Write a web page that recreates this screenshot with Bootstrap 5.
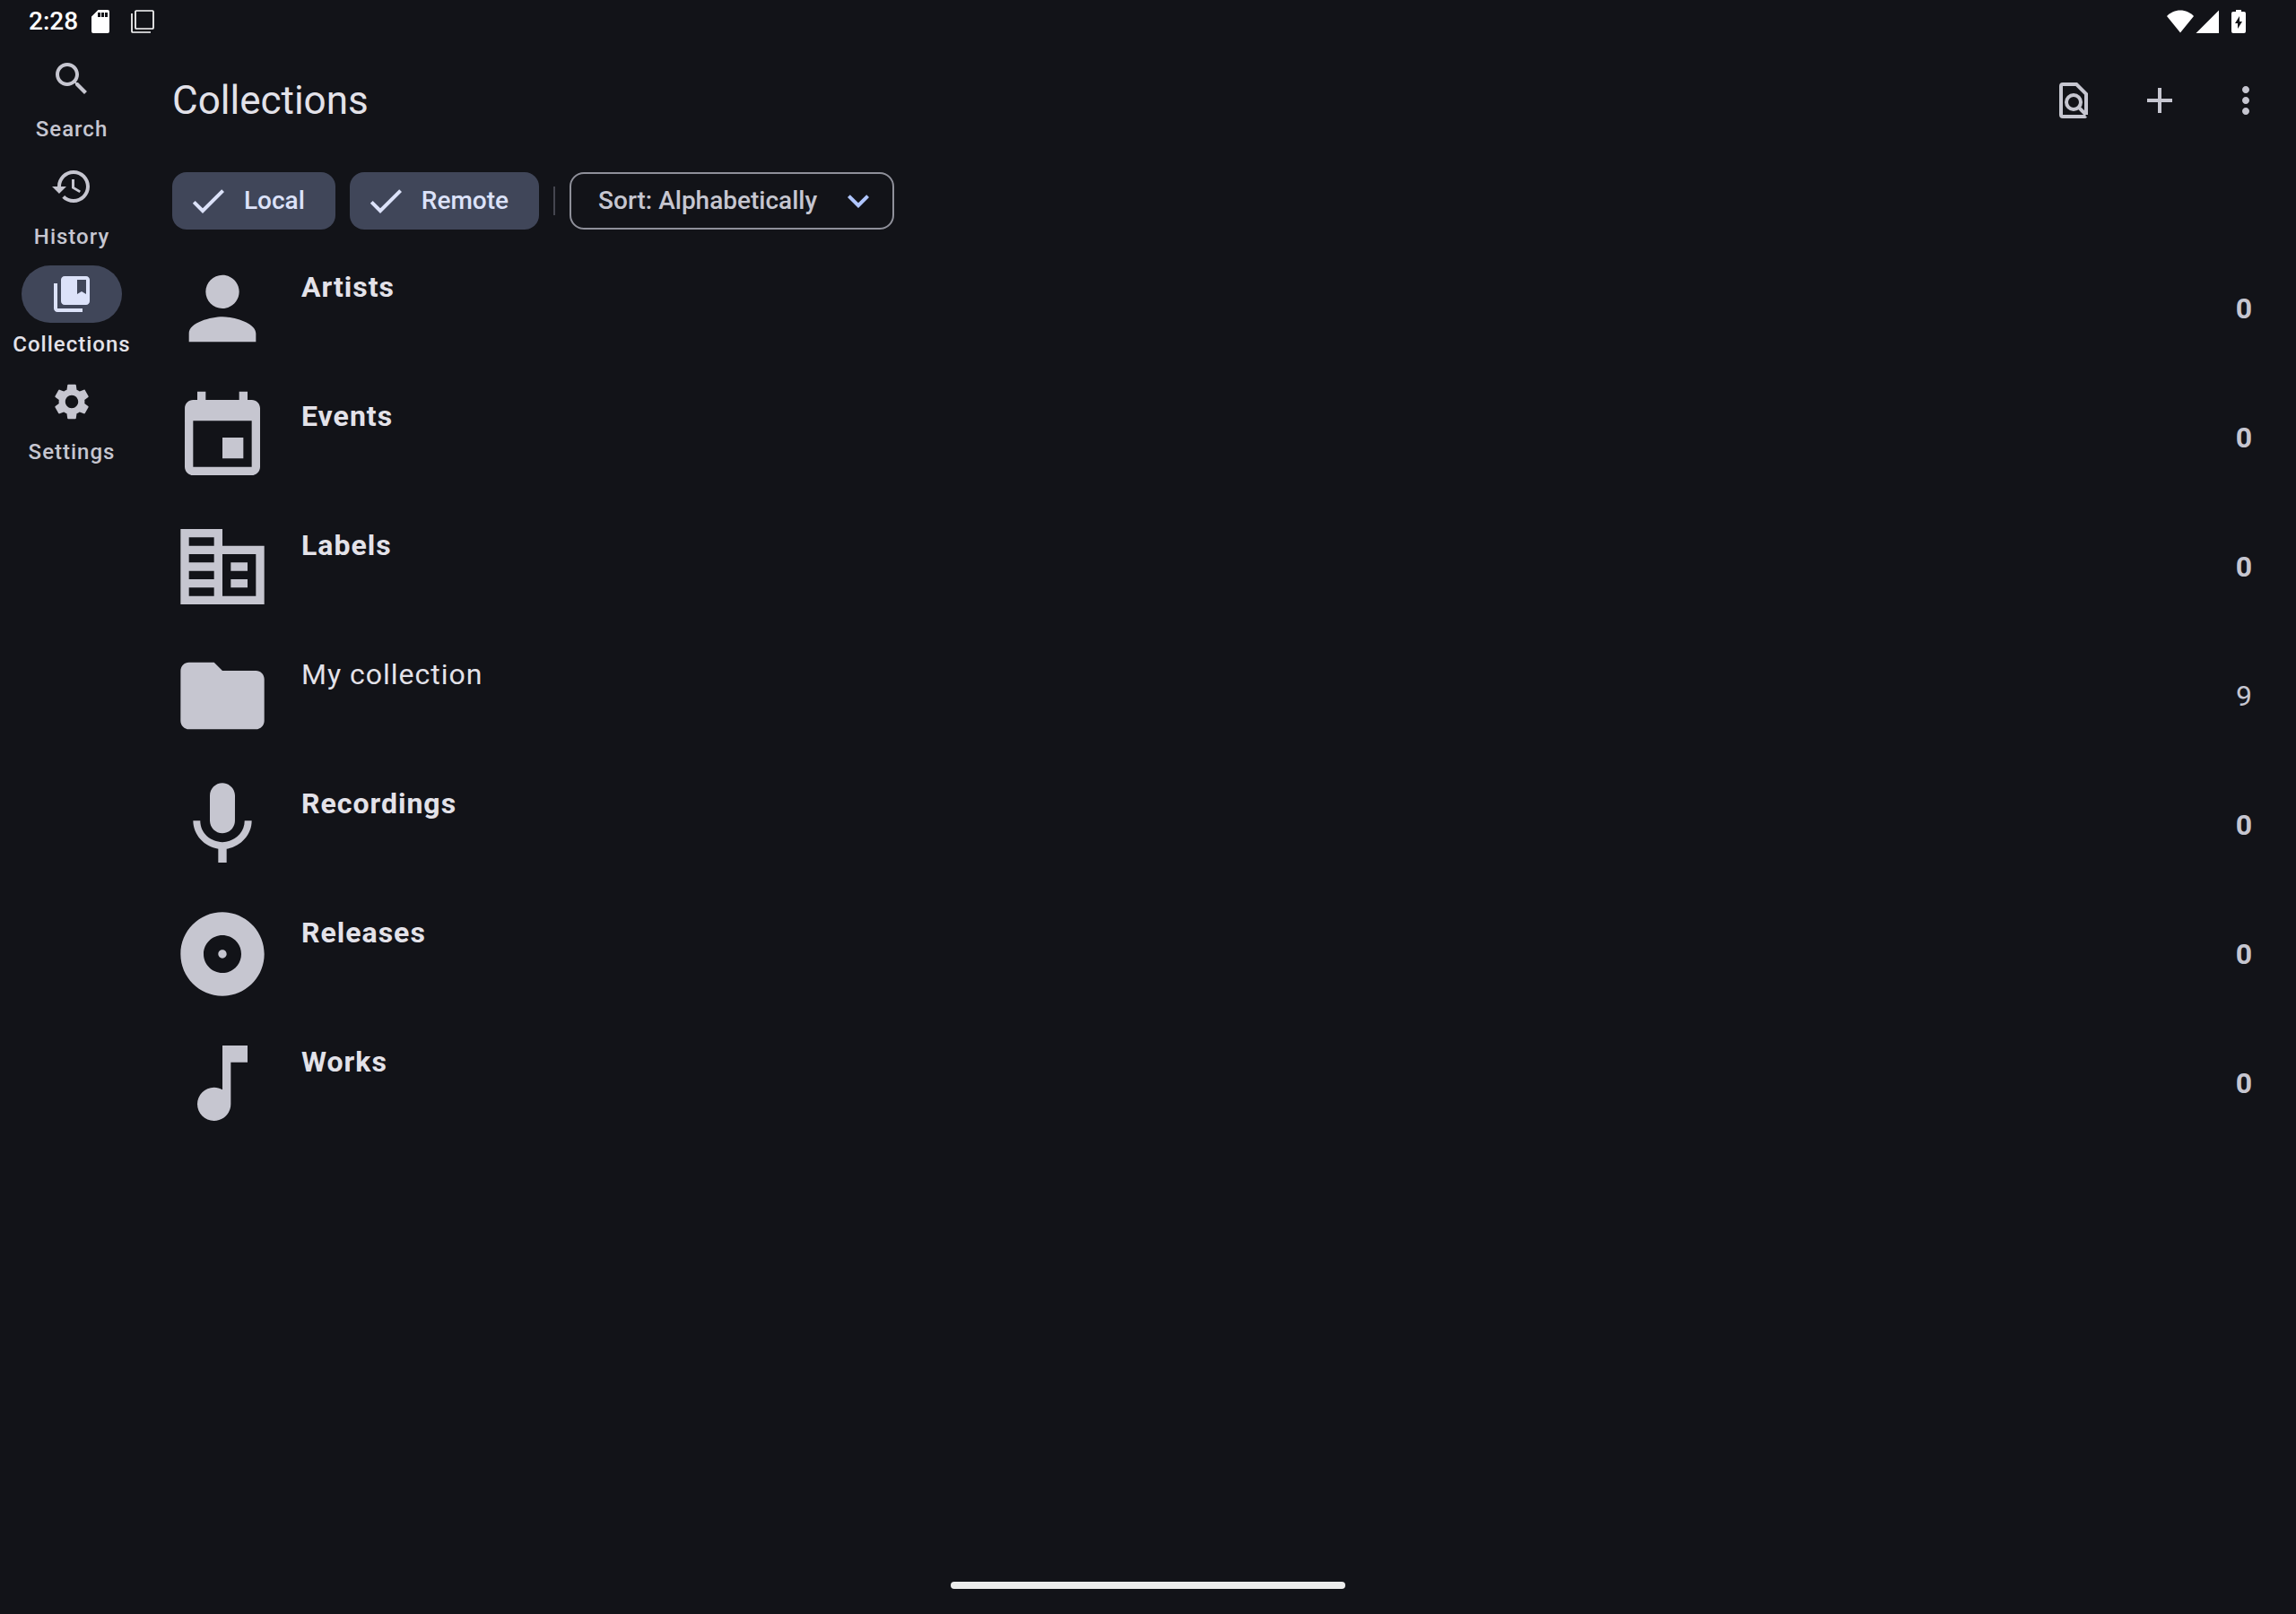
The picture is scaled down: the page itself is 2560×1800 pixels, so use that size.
<!DOCTYPE html>
<html lang="en" data-bs-theme="dark">
<head>
<meta charset="utf-8">
<meta name="viewport" content="width=device-width, initial-scale=1">
<title>Collections</title>
<link href="https://cdn.jsdelivr.net/npm/bootstrap@5.3.0/dist/css/bootstrap.min.css" rel="stylesheet">
<style>
  :root {
    --surface: #121318;
    --on-surface: #e3e2e9;
    --on-surface-variant: #c6c6d0;
    --outline: #8f909a;
    --outline-variant: #45464f;
    --secondary-container: #404659;
    --on-secondary-container: #dce2f9;
    --primary: #b0c6ff;
  }
  body {
    background: var(--surface);
    color: var(--on-surface);
    font-family: Roboto, sans-serif;
    font-size: 32px;
    line-height: 48px;
  }
  svg { display: block; fill: currentColor; flex: none; }
  .status-bar { height: 48px; padding: 0 56px 0 32px; color: #fff; font-size: 28px; font-weight: 500; line-height: 48px; }
  .status-icons { gap: 24px; margin-left: 15px; }
  .rail { width: 160px; padding-top: 8px; gap: 16px; }
  .rail-item { gap: 8px; color: var(--on-surface-variant); font-size: 24px; font-weight: 500; line-height: 32px; letter-spacing: 1px; }
  .rail-pill { width: 112px; height: 64px; }
  .rail-item.active { color: var(--on-surface); }
  .rail-item.active .rail-pill { background: var(--secondary-container); color: var(--on-secondary-container); }
  .pane { padding-left: 32px; }
  .top-bar { height: 128px; padding-right: 8px; }
  .top-bar h1 { color: var(--on-surface); font-size: 44px; line-height: 56px; font-weight: 400; }
  .icon-button { --bs-btn-padding-x: 24px; --bs-btn-padding-y: 24px; --bs-btn-border-width: 0; --bs-btn-color: var(--on-surface-variant); }
  .filters { padding: 16px 0; gap: 16px; }
  .chip { height: 64px; border-radius: 16px; font-size: 28px; font-weight: 500; line-height: 40px; }
  .btn-check:checked + .chip { background: var(--secondary-container); color: var(--on-secondary-container); }
  .filter-chip { gap: 16px; padding: 0 34px 0 16px; border: 0; }
  .sort-chip { appearance: none; background: transparent; border: 2px solid var(--outline); color: var(--on-surface-variant); padding: 0 83px 0 30px; }
  .sort-arrow { right: 16px; color: var(--primary); }
  .chip-divider { width: 2px; height: 32px; background: var(--outline-variant); }
  .entity { gap: 32px; padding: 16px 48px 16px 0; color: var(--on-surface); letter-spacing: 1px; }
  .entity-icon, .entity-count { color: var(--on-surface-variant); }
  .entity-name { padding-top: 8px; }
  .home-bar { width: 440px; height: 8px; border-radius: 4px; background: #ececec; margin-bottom: 28px; }
</style>
<script src="https://cdn.jsdelivr.net/npm/bootstrap@5.3.0/dist/js/bootstrap.bundle.min.js" defer></script>
</head>
<body class="d-flex flex-column min-vh-100">

<header class="status-bar d-flex align-items-center">
  <span>2:28</span>
  <div class="status-icons d-flex align-items-center">
    <svg width="20" height="26" viewBox="0 0 20 26"><path fill-rule="evenodd" d="M7.500 0H18a2 2 0 0 1 2 2V24a2 2 0 0 1-2 2H2a2 2 0 0 1-2-2V7.500zM7 3v5h3V3zM11 3v5h3V3zM15 3v5h3V3z"/></svg>
    <svg width="26" height="26" viewBox="0 0 26 26"><g fill="none" stroke="currentColor" stroke-width="1.700"><rect x="5" y="1" width="20" height="20" rx="1"/><path d="M1 4v20a1 1 0 0 0 1 1h20"/></g></svg>
  </div>
  <div class="d-flex align-items-center ms-auto">
    <svg width="30" height="26" viewBox="0 0 30 26"><path d="M15 25.500 0 7C4 3 9 .500 15 .500S26 3 30 7z"/></svg>
    <svg width="42" height="26" viewBox="0 0 42 26"><path d="M2.500 26 28 .500V26z"/></svg>
    <svg width="16" height="26" viewBox="0 0 16 26"><path fill-rule="evenodd" d="M5 0h6v2h3a2 2 0 0 1 2 2v20a2 2 0 0 1-2 2H2a2 2 0 0 1-2-2V4a2 2 0 0 1 2-2h3zM9 7l-5 8h3v6l5-8H9z"/></svg>
  </div>
</header>

<div class="d-flex flex-grow-1">
  <nav class="rail d-flex flex-column flex-shrink-0" aria-label="Main">
    <a href="#search" class="rail-item d-flex flex-column align-items-center text-decoration-none">
      <span class="rail-pill rounded-pill d-flex align-items-center justify-content-center"><svg width="48" height="48" viewBox="0 0 24 24"><path d="M15.500 14h-.790l-.280-.270C15.410 12.590 16 11.110 16 9.500 16 5.910 13.090 3 9.500 3S3 5.910 3 9.500 5.910 16 9.500 16c1.610 0 3.090-.590 4.230-1.570l.270.280v.790l5 4.990L20.490 19l-4.990-5zm-6 0C7.010 14 5 11.990 5 9.500S7.010 5 9.500 5 14 7.010 14 9.500 11.990 14 9.500 14z"/></svg></span>
      <span>Search</span>
    </a>
    <a href="#history" class="rail-item d-flex flex-column align-items-center text-decoration-none">
      <span class="rail-pill rounded-pill d-flex align-items-center justify-content-center"><svg width="48" height="48" viewBox="0 0 24 24"><path d="M13 3c-4.970 0-9 4.030-9 9H1l3.890 3.890.070.140L9 12H6c0-3.870 3.130-7 7-7s7 3.130 7 7-3.130 7-7 7c-1.930 0-3.680-.790-4.940-2.060l-1.420 1.420C8.270 19.990 10.510 21 13 21c4.970 0 9-4.030 9-9s-4.030-9-9-9zm-1 5v5l4.280 2.540.720-1.210-3.500-2.080V8H12z"/></svg></span>
      <span>History</span>
    </a>
    <a href="#collections" class="rail-item active d-flex flex-column align-items-center text-decoration-none" aria-current="page">
      <span class="rail-pill rounded-pill d-flex align-items-center justify-content-center"><svg width="48" height="48" viewBox="0 0 24 24"><path d="M4 6H2v14c0 1.100.900 2 2 2h14v-2H4V6zm16-4H8c-1.100 0-2 .900-2 2v12c0 1.100.900 2 2 2h12c1.100 0 2-.900 2-2V4c0-1.100-.900-2-2-2zm0 10-2.500-1.500L15 12V4h5v8z"/></svg></span>
      <span>Collections</span>
    </a>
    <a href="#settings" class="rail-item d-flex flex-column align-items-center text-decoration-none">
      <span class="rail-pill rounded-pill d-flex align-items-center justify-content-center"><svg width="48" height="48" viewBox="0 0 24 24"><path d="M19.140 12.940c.040-.300.060-.610.060-.940 0-.320-.020-.640-.070-.940l2.030-1.580c.180-.140.230-.410.120-.610l-1.920-3.320c-.120-.220-.370-.290-.590-.220l-2.390.960c-.500-.380-1.030-.700-1.620-.940l-.360-2.540c-.040-.240-.240-.410-.480-.410h-3.840c-.240 0-.430.170-.470.410l-.360 2.540c-.590.240-1.130.570-1.620.940l-2.390-.960c-.220-.080-.470 0-.590.220L2.740 8.870c-.120.210-.080.470.120.610l2.030 1.580c-.050.300-.090.630-.090.940s.020.640.070.940l-2.030 1.580c-.180.140-.230.410-.120.610l1.920 3.320c.120.220.370.290.590.220l2.390-.960c.500.380 1.030.700 1.620.940l.360 2.540c.050.240.240.410.480.410h3.840c.240 0 .440-.170.470-.410l.360-2.540c.590-.240 1.130-.560 1.620-.940l2.390.960c.220.080.470 0 .590-.220l1.920-3.320c.120-.220.070-.470-.120-.610l-2.010-1.580zM12 15.600c-1.980 0-3.600-1.620-3.600-3.600s1.620-3.600 3.600-3.600 3.600 1.620 3.600 3.600-1.620 3.600-3.600 3.600z"/></svg></span>
      <span>Settings</span>
    </a>
  </nav>

  <main class="pane flex-grow-1">
    <div class="top-bar d-flex align-items-center">
      <h1 class="mb-0 me-auto">Collections</h1>
      <button type="button" class="btn icon-button" aria-label="Find in page"><svg width="48" height="48" viewBox="0 0 24 24"><g fill="none" stroke="currentColor" stroke-width="2"><path d="M18.800 20.700A1 1 0 0 1 18 21H6a1 1 0 0 1-1-1V4a1 1 0 0 1 1-1h7.600L19 8.400V20"/><circle cx="12" cy="13" r="4"/><path d="m14.800 15.800 4.200 4.200"/></g></svg></button>
      <button type="button" class="btn icon-button" aria-label="Create collection"><svg width="48" height="48" viewBox="0 0 24 24"><path d="M19 13h-6v6h-2v-6H5v-2h6V5h2v6h6v2z"/></svg></button>
      <button type="button" class="btn icon-button" aria-label="More options"><svg width="48" height="48" viewBox="0 0 24 24"><path d="M12 8c1.100 0 2-.900 2-2s-.900-2-2-2-2 .900-2 2 .900 2 2 2zm0 2c-1.100 0-2 .900-2 2s.900 2 2 2 2-.900 2-2-.900-2-2-2zm0 6c-1.100 0-2 .900-2 2s.900 2 2 2 2-.900 2-2-.900-2-2-2z"/></svg></button>
    </div>

    <div class="filters d-flex align-items-center">
      <input type="checkbox" class="btn-check" id="filter-local" checked>
      <label class="btn chip filter-chip d-flex align-items-center" for="filter-local"><svg width="48" height="48" viewBox="0 0 24 24"><path d="M9 16.170 4.830 12l-1.420 1.410L9 19 21 7l-1.410-1.410z"/></svg>Local</label>
      <input type="checkbox" class="btn-check" id="filter-remote" checked>
      <label class="btn chip filter-chip d-flex align-items-center" for="filter-remote"><svg width="48" height="48" viewBox="0 0 24 24"><path d="M9 16.170 4.830 12l-1.420 1.410L9 19 21 7l-1.410-1.410z"/></svg>Remote</label>
      <div class="chip-divider"></div>
      <div class="position-relative d-flex align-items-center">
        <select class="chip sort-chip" aria-label="Sort order"><option selected>Sort: Alphabetically</option></select>
        <svg class="sort-arrow position-absolute pe-none" width="48" height="48" viewBox="0 0 24 24"><path d="M16.590 8.590 12 13.170 7.410 8.590 6 10l6 6 6-6z"/></svg>
      </div>
    </div>

    <div class="d-flex flex-column">
      <a href="#artists" class="entity fw-bold d-flex text-decoration-none">
        <svg class="entity-icon" width="112" height="112" viewBox="0 0 24 24"><path d="M12 12c2.210 0 4-1.790 4-4s-1.790-4-4-4-4 1.790-4 4 1.790 4 4 4zm0 2c-2.670 0-8 1.340-8 4v2h16v-2c0-2.660-5.330-4-8-4z"/></svg>
        <span class="entity-name flex-grow-1">Artists</span><span class="entity-count align-self-center">0</span>
      </a>
      <a href="#events" class="entity fw-bold d-flex text-decoration-none">
        <svg class="entity-icon" width="112" height="112" viewBox="0 0 24 24"><path d="M17 12h-5v5h5v-5zM16 1v2H8V1H6v2H5c-1.110 0-1.990.900-1.990 2L3 19c0 1.100.890 2 2 2h14c1.100 0 2-.900 2-2V5c0-1.100-.900-2-2-2h-1V1h-2zm3 18H5V8h14v11z"/></svg>
        <span class="entity-name flex-grow-1">Events</span><span class="entity-count align-self-center">0</span>
      </a>
      <a href="#labels" class="entity fw-bold d-flex text-decoration-none">
        <svg class="entity-icon" width="112" height="112" viewBox="0 0 24 24"><path fill-rule="evenodd" d="M12 7V3H2v18h20V7H12zM10 19H4v-2h6v2zm0-4H4v-2h6v2zm0-4H4V9h6v2zm0-4H4V5h6v2zm10 12h-8V9h8v10zm-2-8h-4v2h4v-2zm0 4h-4v2h4v-2z"/></svg>
        <span class="entity-name flex-grow-1">Labels</span><span class="entity-count align-self-center">0</span>
      </a>
      <a href="#my-collection" class="entity d-flex text-decoration-none">
        <svg class="entity-icon" width="112" height="112" viewBox="0 0 24 24"><path d="M10 4H4c-1.100 0-1.990.900-1.990 2L2 18c0 1.100.900 2 2 2h16c1.100 0 2-.900 2-2V8c0-1.100-.900-2-2-2h-8l-2-2z"/></svg>
        <span class="entity-name flex-grow-1">My collection</span><span class="entity-count align-self-center">9</span>
      </a>
      <a href="#recordings" class="entity fw-bold d-flex text-decoration-none">
        <svg class="entity-icon" width="112" height="112" viewBox="0 0 24 24"><path d="M12 14c1.660 0 2.990-1.340 2.990-3L15 5c0-1.660-1.340-3-3-3S9 3.340 9 5v6c0 1.660 1.340 3 3 3zm5.300-3c0 3-2.540 5.100-5.300 5.100S6.700 14 6.700 11H5c0 3.410 2.720 6.230 6 6.720V21h2v-3.280c3.280-.480 6-3.300 6-6.720h-1.700z"/></svg>
        <span class="entity-name flex-grow-1">Recordings</span><span class="entity-count align-self-center">0</span>
      </a>
      <a href="#releases" class="entity fw-bold d-flex text-decoration-none">
        <svg class="entity-icon" width="112" height="112" viewBox="0 0 24 24"><path d="M12 2C6.480 2 2 6.480 2 12s4.480 10 10 10 10-4.480 10-10S17.520 2 12 2zm0 14.500c-2.490 0-4.500-2.010-4.500-4.500S9.510 7.500 12 7.500s4.500 2.010 4.500 4.500-2.010 4.500-4.500 4.500zm0-5.500c-.550 0-1 .450-1 1s.450 1 1 1 1-.450 1-1-.450-1-1-1z"/></svg>
        <span class="entity-name flex-grow-1">Releases</span><span class="entity-count align-self-center">0</span>
      </a>
      <a href="#works" class="entity fw-bold d-flex text-decoration-none">
        <svg class="entity-icon" width="112" height="112" viewBox="0 0 24 24"><path d="M12 3v10.550c-.590-.340-1.270-.550-2-.550-2.210 0-4 1.790-4 4s1.790 4 4 4 4-1.790 4-4V7h4V3h-6z"/></svg>
        <span class="entity-name flex-grow-1">Works</span><span class="entity-count align-self-center">0</span>
      </a>
    </div>
  </main>
</div>

<div class="home-bar mx-auto"></div>
</body>
</html>
